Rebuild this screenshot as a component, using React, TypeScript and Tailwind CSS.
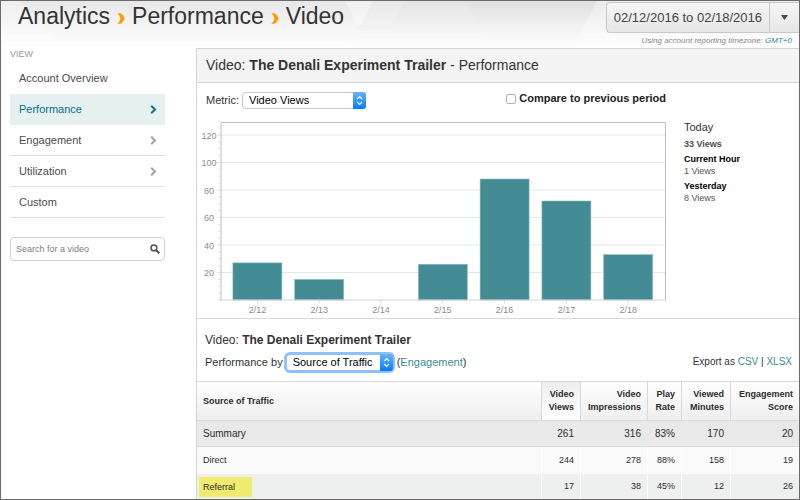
import React from "react";

const VIEWS = [
  { day: "2/12", views: 27 },
  { day: "2/13", views: 15 },
  { day: "2/14", views: 0 },
  { day: "2/15", views: 26 },
  { day: "2/16", views: 88 },
  { day: "2/17", views: 72 },
  { day: "2/18", views: 33 },
];

const NAV = [
  { label: "Account Overview", arrow: false, active: false },
  { label: "Performance", arrow: true, active: true },
  { label: "Engagement", arrow: true, active: false },
  { label: "Utilization", arrow: true, active: false },
  { label: "Custom", arrow: false, active: false },
];

const COLUMNS = [
  { first: "Video", second: "Views", width: "w-[39px]", sorted: true },
  { first: "Video", second: "Impressions", width: "w-[67px]", sorted: false },
  { first: "Play", second: "Rate", width: "w-[34px]", sorted: false },
  { first: "Viewed", second: "Minutes", width: "w-[49px]", sorted: false },
  { first: "Engagement", second: "Score", width: "w-[69px]", sorted: false },
];

function HeaderBackdrop() {
  return (
    <svg
      className="absolute inset-0 h-full w-full"
      viewBox="0 0 798 47"
      preserveAspectRatio="none"
      aria-hidden="true"
    >
      <defs>
        <linearGradient id="fade" x1="0" y1="0" x2="0" y2="1">
          <stop offset="0" stopColor="#e0e0e0" />
          <stop offset="0.5" stopColor="#f0f0f0" />
          <stop offset="1" stopColor="#ffffff" />
        </linearGradient>
      </defs>
      <rect width="798" height="47" fill="url(#fade)" />
      <g fill="#ffffff">
        <path d="M0 0H344L356 24L344 47H0Z" fillOpacity="0.25" />
        <path d="M0 0H18L60 47H0Z" fillOpacity="0.3" />
        <path d="M344 0H372L360 24H356Z" fillOpacity="0.5" />
        <path d="M372 0H404L390 24H360Z" fillOpacity="0.25" />
        <path d="M404 0H464L490 47H344L356 24H390Z" fillOpacity="0.12" />
        <path d="M596 0H798V47H572Z" fillOpacity="0.35" />
      </g>
    </svg>
  );
}

function Crumb() {
  return (
    <svg className="mx-[7px] mt-[5px] h-[11px] w-[8px]" viewBox="0 0 8 11" aria-hidden="true">
      <path d="M0.3 0.3H3.6C5.4 1.2 7 3.4 7.6 5.5C7 7.6 5.4 9.8 3.6 10.7H0.3C1.8 9.4 3 7.6 3.3 5.5C3 3.4 1.8 1.6 0.3 0.3Z" fill="#ff9a00" />
    </svg>
  );
}

function SelectBox(props: { id: string; options: string[]; box: string; focused?: boolean }) {
  const ring = props.focused
    ? "border-[#8fc0f8] ring-2 ring-[#8fc0f8]"
    : "border-[#c6c6c6]";
  return (
    <span className={"relative inline-block " + props.box}>
      <select
        id={props.id}
        className={"block h-[17px] w-full appearance-none rounded-sm border bg-white pl-1.5 pr-4 text-[11px] leading-[15px] text-black outline-none " + ring}
      >
        {props.options.map((o) => (
          <option key={o}>{o}</option>
        ))}
      </select>
      <svg className="pointer-events-none absolute right-0 top-0 h-[17px] w-[13px]" viewBox="0 0 13 17" aria-hidden="true">
        <defs>
          <linearGradient id={props.id + "-chip"} x1="0" y1="0" x2="0" y2="1">
            <stop offset="0" stopColor="#6bb3fa" />
            <stop offset="1" stopColor="#067bfb" />
          </linearGradient>
        </defs>
        <path d="M0 0H10Q13 0 13 3V14Q13 17 10 17H0Z" fill={"url(#" + props.id + "-chip)"} />
        <path d="M4.2 7L6.6 4.6L9 7M4.2 10L6.6 12.4L9 10" fill="none" stroke="#fff" strokeWidth="1.2" />
      </svg>
    </span>
  );
}

function Sidebar() {
  return (
    <aside className="w-[195px] shrink-0 pl-[9px] pr-[31px]">
      <h2 className="pt-px text-[9px] leading-[10px] text-[#999]">VIEW</h2>
      <nav className="mt-1">
        {NAV.map((item, i) => (
          <a
            key={item.label}
            href="#"
            className={
              "flex h-[31px] items-center justify-between pl-[9px] pr-2 text-[11px] " +
              (item.active ? "bg-[#e6f0f1] text-[#007380]" : "text-[#4c4c4c]") +
              (i > 1 ? " border-b border-[#dfdfdf]" : "")
            }
          >
            {item.label}
            {item.arrow && (
              <svg className="h-[9px] w-[7px]" viewBox="0 0 7 9" aria-hidden="true">
                <path d="M1.2 0.8L5 4.5L1.2 8.2" fill="none" stroke={item.active ? "#147a85" : "#a3a3a3"} strokeWidth="2.1" />
              </svg>
            )}
          </a>
        ))}
      </nav>
      <form className="mt-[19px] flex h-6 items-center rounded-sm border border-[#d0d0d0] bg-white pl-[5px] pr-1">
        <input
          type="text"
          aria-label="Search for a video"
          placeholder="Search for a video"
          className="h-4 min-w-0 flex-1 bg-transparent text-[9px] outline-none placeholder:text-[#808080]"
        />
        <button type="button" aria-label="Search" className="h-[10px] w-[10px]">
          <svg viewBox="0 0 10 10" className="h-full w-full" aria-hidden="true">
            <circle cx="3.9" cy="3.9" r="2.9" fill="none" stroke="#505050" strokeWidth="1.5" />
            <path d="M6.1 6.1L9.2 9.2" stroke="#505050" strokeWidth="2" />
          </svg>
        </button>
      </form>
    </aside>
  );
}

function Chart() {
  const left = 24;
  const right = 469;
  const base = 184;
  const unit = 1.375;
  const step = 61.8;
  const ticks: number[] = [];
  for (let v = 0; v <= 130; v += 5) ticks.push(v);
  return (
    <svg className="block w-full" viewBox="0 0 470 202" role="img" aria-label="Video views by day">
      <g stroke="#e6e6e6" strokeWidth="1">
        {[20, 40, 60, 80, 100, 120].map((v) => (
          <line key={v} x1={left - 4} x2={right} y1={base - v * unit} y2={base - v * unit} />
        ))}
        {ticks.map((v) => (
          <line key={v} x1={left - 3} x2={left} y1={base - v * unit} y2={base - v * unit} />
        ))}
      </g>
      <path d={"M" + left + " " + base + "V6.5H468.5V" + base} fill="none" stroke="#bebebe" />
      {VIEWS.map((d, i) => {
        const center = 60.4 + i * step;
        return (
          <g key={d.day}>
            <line x1={center} x2={center} y1={base} y2={base + 3.5} stroke="#dcdcdc" />
            {d.views > 0 && (
              <rect x={center - 24.5} y={base - d.views * unit} width="49" height={d.views * unit} fill="#438c96" stroke="#8fbcc2" strokeWidth="0.6" />
            )}
            <text x={center} y="197" textAnchor="middle" fontSize="9" fill="#8c8c8c">{d.day}</text>
          </g>
        );
      })}
      <line x1={left - 2} x2={right} y1={base} y2={base} stroke="#d4d4d4" />
      {[20, 40, 60, 80, 100, 120].map((v) => (
        <text key={v} x="12" y={base - v * unit + 3.5} textAnchor="middle" fontSize="9" fill="#8c8c8c">{v}</text>
      ))}
    </svg>
  );
}

function Row(props: { name: string; values: string[]; kind: "summary" | "odd" | "even" }) {
  const summary = props.kind === "summary";
  const tone = summary
    ? "h-[26px] bg-[#e9e9e9] text-[10px]"
    : props.kind === "odd"
      ? "h-[27px] bg-[#fafafa] text-[9px]"
      : "h-[25px] bg-[#eef0f0] text-[9px]";
  return (
    <tr className={tone + " text-[#2c2c2c]"}>
      <td className={"p-0 " + (summary ? "border-b border-[#d8d8d8] pl-1.5" : "pl-[2px]")}>
        {props.kind === "even" ? (
          <mark className="block h-5 w-[53px] bg-[#eeec6e] pl-1 leading-5 text-[#2c2c2c]">{props.name}</mark>
        ) : (
          <span className={summary ? "" : "pl-1"}>{props.name}</span>
        )}
      </td>
      {props.values.map((v, i) => (
        <td
          key={i}
          className={"p-0 pr-1.5 text-right " + (summary ? "border-b border-[#d8d8d8]" : "border-l border-white")}
        >
          {v}
        </td>
      ))}
    </tr>
  );
}

export default function App() {
  return (
    <div className="min-h-screen overflow-hidden border border-[#6b6b6b] bg-white font-['Liberation_Sans',Arial,sans-serif] text-[#333]">
      <header className="relative flex h-[47px] justify-between">
        <HeaderBackdrop />
        <h1 className="relative flex h-[30px] items-center pl-[17px] text-[23px] leading-[28px] text-[#333]">
          Analytics
          <Crumb />
          Performance
          <Crumb />
          Video
        </h1>
        <div className="relative flex flex-col items-end pt-px">
          <div className="flex h-[31px] rounded-l-sm border border-r-0 border-[#c8c8c8] bg-gradient-to-b from-[#f6f6f6] to-[#e6e6e6] text-[13px] text-[#444]">
            <button type="button" className="px-[7px]">02/12/2016 to 02/18/2016</button>
            <button type="button" aria-label="Choose dates" className="flex w-[30px] items-center justify-center border-l border-[#c8c8c8]">
              <svg className="h-[5px] w-[7px]" viewBox="0 0 7 5" aria-hidden="true">
                <path d="M0 0H7L3.5 5Z" fill="#4a4a4a" />
              </svg>
            </button>
          </div>
          <p className="pr-[7px] pt-[3px] text-[8px] italic leading-[10px] text-[#8a8a8a]">
            Using account reporting timezone: <a href="#" className="text-[#3c8c98]">GMT+0</a>
          </p>
        </div>
      </header>

      <div className="flex">
        <Sidebar />
        <main className="min-w-0 flex-1 border-l border-t border-[#d4d4d4]">
          <h2 className="h-[34px] border-b border-[#d4d4d4] bg-[#f4f4f4] pl-[9px] text-[14px] leading-[33px]">
            Video: <b>The Denali Experiment Trailer</b> - Performance
          </h2>

          <section className="border-b border-[#d8d8d8]">
            <div className="flex">
              <div className="min-w-0 flex-1">
                <div className="flex h-[33px] justify-between pl-[9px] pr-px pt-[9px] text-[11px]">
                  <div className="flex h-[17px] items-center gap-[3px]">
                    <label htmlFor="metric">Metric:</label>
                    <SelectBox id="metric" options={["Video Views"]} box="w-[124px]" />
                  </div>
                  <label className="flex h-[13px] items-center gap-[3px] font-bold text-[#222]">
                    <input type="checkbox" className="h-[10px] w-[10px] appearance-none rounded-xs border border-[#b4b4b4] bg-white" />
                    Compare to previous period
                  </label>
                </div>
                <Chart />
              </div>
              <div className="w-[132px] shrink-0 pl-[17px] pt-[37px] text-[9px] leading-[12px]">
                <h3 className="text-[11px] leading-[14px]">Today</h3>
                <p className="mt-1 font-bold text-[#505050]">33 Views</p>
                <h4 className="mt-[3px] font-bold text-black">Current Hour</h4>
                <p className="text-[#555]">1 Views</p>
                <h4 className="mt-[3px] font-bold text-black">Yesterday</h4>
                <p className="text-[#555]">8 Views</p>
              </div>
            </div>
          </section>

          <section>
            <div className="flex h-[62px] items-start justify-between pl-2 pr-[7px] pt-[13px]">
              <div>
                <h2 className="text-[12px] leading-[16px]">
                  Video: <b>The Denali Experiment Trailer</b>
                </h2>
                <div className="mt-[6px] flex h-[17px] items-center text-[11px]">
                  <label htmlFor="dimension" className="pr-[3px]">Performance by</label>
                  <SelectBox id="dimension" options={["Source of Traffic"]} box="w-[107px]" focused />
                  <span className="pl-1">
                    (<a href="#" className="text-[#3c8c98]">Engagement</a>)
                  </span>
                </div>
              </div>
              <p className="pt-[22px] text-[10px] leading-[15px]">
                Export as <a href="#" className="text-[#3c8c98]">CSV</a> | <a href="#" className="text-[#3c8c98]">XLSX</a>
              </p>
            </div>

            <table className="w-full table-fixed border-separate border-spacing-0">
              <thead>
                <tr className="h-10 bg-gradient-to-b from-white to-[#eeeeee] text-[9px] leading-[13px] text-[#2c2c2c]">
                  <th scope="col" className="border-y border-[#d8d8d8] p-0 pl-1.5 text-left">Source of Traffic</th>
                  {COLUMNS.map((c) => (
                    <th
                      key={c.first + c.second}
                      scope="col"
                      className={
                        "border-y border-l border-[#d8d8d8] p-0 pr-1.5 text-right " +
                        c.width +
                        (c.sorted ? " bg-gradient-to-b from-[#eeeeee] to-white" : "")
                      }
                    >
                      {c.first}
                      <br />
                      {c.second}
                    </th>
                  ))}
                </tr>
              </thead>
              <tbody>
                <Row name="Summary" values={["261", "316", "83%", "170", "20"]} kind="summary" />
                <Row name="Direct" values={["244", "278", "88%", "158", "19"]} kind="odd" />
                <Row name="Referral" values={["17", "38", "45%", "12", "26"]} kind="even" />
              </tbody>
            </table>
          </section>
        </main>
      </div>
    </div>
  );
}
